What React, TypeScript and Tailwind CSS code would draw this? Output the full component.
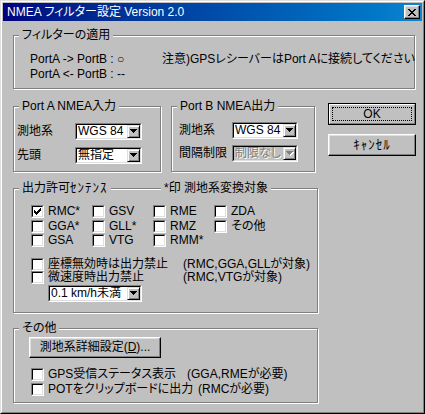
import React from "react";

const FONT = { fontFamily: '"Liberation Sans", "Noto Sans CJK JP", sans-serif' };

const GroupBox: React.FC<{ label: React.ReactNode; className: string; children?: React.ReactNode }> = ({
  label,
  className,
  children,
}) => (
  <div className={`relative border border-[#808080] shadow-[inset_1px_1px_0_#fff,1px_1px_0_#fff] ${className}`}>
    <span className="absolute left-[5px] top-[-8px] whitespace-nowrap bg-[#c0c0c0] px-[3px] leading-[14px]">
      {label}
    </span>
    {children}
  </div>
);

const Arrow = ({ disabled }: { disabled?: boolean }) => (
  <svg width="8" height="5" shapeRendering="crispEdges" className="block">
    {disabled && <path d="M1 1h7v1H1zM2 2h5v1H2zM3 3h3v1H3zM4 4h1v1H4z" fill="#fff" />}
    <path d="M0 0h7v1H0zM1 1h5v1H1zM2 2h3v1H2zM3 3h1v1H3z" fill={disabled ? "#808080" : "#000"} />
  </svg>
);

const Combo: React.FC<{ value: string; className: string; disabled?: boolean }> = ({ value, className, disabled }) => (
  <div className={`flex h-[17px] border border-t-[#808080] border-l-[#808080] border-r-white border-b-white ${className}`}>
    <div
      className={`flex flex-1 border border-t-black border-l-black border-r-[#dfdfdf] border-b-[#dfdfdf] ${
        disabled ? "bg-[#c0c0c0]" : "bg-white"
      }`}
    >
      <span
        className={`flex-1 overflow-hidden whitespace-nowrap pl-[1px] leading-[13px] ${
          disabled ? "text-[#808080] [text-shadow:1px_1px_0_#fff]" : "text-black"
        }`}
      >
        {value}
      </span>
      <div className="flex w-[13px] items-center justify-center border border-t-[#dfdfdf] border-l-[#dfdfdf] border-r-black border-b-black bg-[#c0c0c0] shadow-[inset_1px_1px_0_#fff,inset_-1px_-1px_0_#808080]">
        <Arrow disabled={disabled} />
      </div>
    </div>
  </div>
);

const Box = ({ checked }: { checked?: boolean }) => (
  <div className="flex h-[13px] w-[13px] shrink-0 border border-t-[#808080] border-l-[#808080] border-r-white border-b-white">
    <div className="flex-1 border border-t-black border-l-black border-r-[#dfdfdf] border-b-[#dfdfdf] bg-white">
      {checked && (
        <svg width="7" height="7" shapeRendering="crispEdges" className="ml-[1px] mt-[1px] block">
          <path
            d="M6 0h1v3H6zM5 1h1v3H5zM4 2h1v3H4zM3 3h1v3H3zM2 4h1v3H2zM1 3h1v3H1zM0 2h1v3H0z"
            fill="#000"
          />
        </svg>
      )}
    </div>
  </div>
);

const CheckItem: React.FC<{ label: React.ReactNode; checked?: boolean; className?: string }> = ({
  label,
  checked,
  className = "",
}) => (
  <div className={`flex h-[13px] items-center gap-[4px] ${className}`}>
    <Box checked={checked} />
    <span className="whitespace-nowrap leading-[13px]">{label}</span>
  </div>
);

// half-width katakana, a bit larger so they read like the bitmap font
const Hankaku = ({ children }: { children: React.ReactNode }) => (
  <span className="text-[13px] tracking-[1px] [font-feature-settings:normal]">{children}</span>
);

const sentences = [
  ["RMC*", "GSV", "RME", "ZDA"],
  ["GGA*", "GLL*", "RMZ", "その他"],
  ["GSA", "VTG", "RMM*", ""],
];

export default function App() {
  return (
    <div
      className="h-[414px] w-[425px] border border-t-[#dfdfdf] border-l-[#dfdfdf] border-r-black border-b-black bg-[#c0c0c0] text-[12px] text-black [font-feature-settings:'palt']"
      style={FONT}
    >
      <div className="flex h-full flex-col border border-t-white border-l-white border-r-[#808080] border-b-[#808080] p-[1px]">
        {/* title bar */}
        <div className="flex h-[18px] items-center bg-gradient-to-r from-[#000080] to-[#1084d0] pl-[4px] pr-[2px]">
          <span className="flex-1 whitespace-nowrap text-[12px] leading-[14px] text-white">
            NMEA フィルター設定 Version 2.0
          </span>
          <div className="flex h-[14px] w-[16px] items-center justify-center border border-t-white border-l-white border-r-black border-b-black bg-[#c0c0c0] shadow-[inset_-1px_-1px_0_#808080,inset_1px_1px_0_#dfdfdf]">
            <svg width="8" height="7" shapeRendering="crispEdges" className="block">
              <path
                d="M0 0h2v1H0zM6 0h2v1H6zM1 1h2v1H1zM5 1h2v1H5zM2 2h4v1H2zM3 3h2v1H3zM2 4h4v1H2zM1 5h2v1H1zM5 5h2v1H5zM0 6h2v1H0zM6 6h2v1H6z"
                fill="#000"
              />
            </svg>
          </div>
        </div>

        <div className="flex flex-1 flex-col pl-[10px] pr-[7px] pt-[14px]">
          {/* フィルターの適用 */}
          <GroupBox label="フィルターの適用" className="h-[54px] w-[402px]">
            <div className="flex pl-[16px] pt-[16px] leading-[15px]">
              <div className="w-[132px] shrink-0">
                <div>PortA -&gt; PortB : ○</div>
                <div>PortA &lt;- PortB : --</div>
              </div>
              <div className="whitespace-nowrap">注意)GPSレシーバーはPort Aに接続してください</div>
            </div>
          </GroupBox>

          <div className="flex items-start">
            <div className="flex w-[305px] shrink-0 flex-col pt-[17px]">
              <div className="flex">
                <GroupBox label="Port A NMEA入力" className="h-[66px] w-[148px]">
                  <div className="flex flex-col gap-[6px] pl-[3px] pt-[15px]">
                    <div className="flex items-center">
                      <span className="w-[58px]">測地系</span>
                      <Combo value="WGS 84" className="w-[67px]" />
                    </div>
                    <div className="flex items-center">
                      <span className="w-[58px]">先頭</span>
                      <Combo value="無指定" className="w-[67px]" />
                    </div>
                  </div>
                </GroupBox>
                <GroupBox label="Port B NMEA出力" className="ml-[10px] h-[66px] w-[144px]">
                  <div className="flex flex-col gap-[5px] pl-[7px] pt-[14px]">
                    <div className="flex items-center">
                      <span className="w-[53px]">測地系</span>
                      <Combo value="WGS 84" className="w-[66px]" />
                    </div>
                    <div className="flex items-center">
                      <span className="w-[53px] whitespace-nowrap">間隔制限</span>
                      <Combo value="制限なし" className="w-[66px]" disabled />
                    </div>
                  </div>
                </GroupBox>
              </div>

              {/* 出力許可センテンス */}
              <GroupBox
                label={
                  <>
                    出力許可<Hankaku>ｾﾝﾃﾝｽ</Hankaku>
                  </>
                }
                className="mt-[16px] h-[125px] w-[305px]"
              >
                <span className="absolute left-[147px] top-[-8px] bg-[#c0c0c0] px-[3px] leading-[14px]">
                  *印 測地系変換対象
                </span>
                <div className="flex flex-col pl-[17px] pt-[16px]">
                  {sentences.map((row, i) => (
                    <div key={i} className={`flex ${i === 0 ? "mb-[2px]" : "mb-[1px]"}`}>
                      {row.map((s, j) => (
                        <div key={j} className="w-[61px]">
                          {s && <CheckItem label={s} checked={s === "RMC*"} />}
                        </div>
                      ))}
                    </div>
                  ))}
                  <div className="mt-[10px] flex items-center">
                    <CheckItem label="座標無効時は出力禁止" className="w-[152px]" />
                    <span className="whitespace-nowrap leading-[13px]">(RMC,GGA,GLLが対象)</span>
                  </div>
                  <div className="flex items-center">
                    <CheckItem label="微速度時出力禁止" className="w-[152px]" />
                    <span className="whitespace-nowrap leading-[13px]">(RMC,VTGが対象)</span>
                  </div>
                  <Combo value="0.1 km/h未満" className="ml-[17px] mt-[1px] w-[94px]" />
                </div>
              </GroupBox>

              {/* その他 */}
              <GroupBox label="その他" className="mt-[15px] h-[75px] w-[305px]">
                <div className="flex flex-col pl-[15px] pt-[8px]">
                  <button className="h-[21px] w-[132px] border border-t-white border-l-white border-r-black border-b-black bg-[#c0c0c0] leading-[17px] shadow-[inset_-1px_-1px_0_#808080,inset_1px_1px_0_#dfdfdf]">
                    測地系詳細設定(<u>D</u>)...
                  </button>
                  <div className="ml-[2px] mt-[10px] flex items-center">
                    <CheckItem label="GPS受信ステータス表示" className="w-[156px]" />
                    <span className="whitespace-nowrap leading-[13px]">(GGA,RMEが必要)</span>
                  </div>
                  <div className="ml-[2px] mt-[2px] flex items-center">
                    <CheckItem label="POTをクリップボードに出力" className="w-[167px]" />
                    <span className="whitespace-nowrap leading-[13px]">(RMCが必要)</span>
                  </div>
                </div>
              </GroupBox>
            </div>

            {/* buttons */}
            <div className="ml-[10px] flex flex-col pt-[14px]">
              <div className="h-[22px] w-[88px] border border-black">
                <div className="relative flex h-full items-center justify-center border border-t-white border-l-white border-r-[#808080] border-b-[#808080] bg-[#c0c0c0]">
                  <div className="absolute inset-[2px] border border-dotted border-black" />
                  <span className="leading-[14px]">OK</span>
                </div>
              </div>
              <button className="mt-[9px] h-[22px] w-[88px] border border-t-white border-l-white border-r-black border-b-black bg-[#c0c0c0] leading-[14px] shadow-[inset_-1px_-1px_0_#808080,inset_1px_1px_0_#dfdfdf]">
                <Hankaku>ｷｬﾝｾﾙ</Hankaku>
              </button>
            </div>
          </div>
        </div>
      </div>
    </div>
  );
}
